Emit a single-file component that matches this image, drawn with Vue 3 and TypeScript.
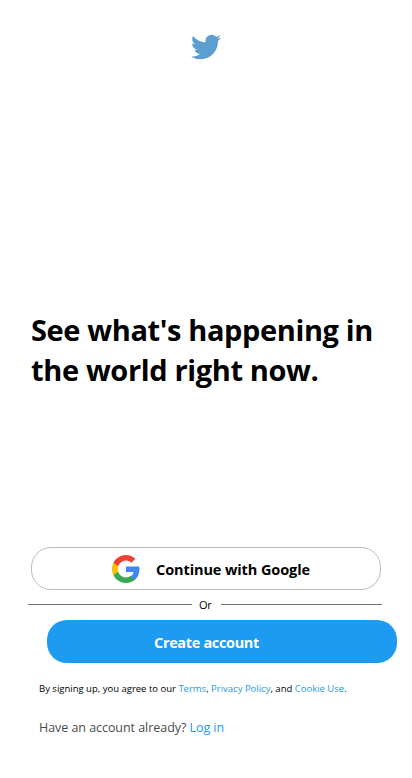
<script setup lang="ts">
const headline: string[] = ["See what's happening in", 'the world right now.']
</script>

<template>
  <main class="page">
    <svg class="bird" viewBox="0 0 24 24" aria-hidden="true">
      <path d="M23.953 4.57a10 10 0 01-2.825.775 4.958 4.958 0 002.163-2.723c-.951.555-2.005.959-3.127 1.184a4.92 4.92 0 00-8.384 4.482C7.69 8.095 4.067 6.13 1.64 3.162a4.822 4.822 0 00-.666 2.475c0 1.71.87 3.213 2.188 4.096a4.904 4.904 0 01-2.228-.616v.06a4.923 4.923 0 003.946 4.827 4.996 4.996 0 01-2.212.085 4.936 4.936 0 004.604 3.417 9.867 9.867 0 01-6.102 2.105c-.39 0-.779-.023-1.17-.067a13.995 13.995 0 007.557 2.209c9.053 0 13.998-7.496 13.998-13.985 0-.21 0-.42-.015-.63A9.935 9.935 0 0024 4.59z" />
    </svg>
    <h1 class="headline">
      <span v-for="(line, i) in headline" :key="line" :class="['line', `line-${i + 1}`]">{{ line }}</span>
    </h1>
    <section class="actions">
      <button class="google" type="button">
        <svg class="google-icon" viewBox="1 1 22 22" aria-hidden="true">
          <path fill="#4285f4" d="M22.56 12.25c0-.78-.07-1.53-.2-2.25H12v4.26h5.92c-.26 1.37-1.04 2.53-2.21 3.31v2.77h3.57c2.08-1.92 3.28-4.74 3.28-8.09z" />
          <path fill="#34a853" d="M12 23c2.97 0 5.46-.98 7.28-2.66l-3.57-2.77c-.98.66-2.23 1.06-3.71 1.06-2.86 0-5.29-1.93-6.16-4.53H2.18v2.84C3.99 20.53 7.7 23 12 23z" />
          <path fill="#fbbc05" d="M5.84 14.09c-.22-.66-.35-1.36-.35-2.09s.13-1.43.35-2.09V7.07H2.18C1.43 8.55 1 10.22 1 12s.43 3.45 1.18 4.93l3.66-2.84z" />
          <path fill="#ea4335" d="M12 5.38c1.62 0 3.06.56 4.21 1.64l3.15-3.15C17.45 2.09 14.97 1 12 1 7.7 1 3.99 3.47 2.18 7.07l3.66 2.84c.87-2.6 3.3-4.53 6.16-4.53z" />
        </svg>
        <span class="google-label">Continue with Google</span>
      </button>
      <div class="divider">
        <span class="rule"></span>
        <span class="or">Or</span>
        <span class="rule"></span>
      </div>
      <button class="create" type="button"><span class="create-label">Create account</span></button>
    </section>
    <p class="terms"><span>By signing up, you agree to our <a>Terms</a>, <a>Privacy Policy</a>, and <a>Cookie Use</a>.</span></p>
    <p class="login"><span>Have an account already? <a>Log in</a></span></p>
  </main>
</template>

<style>
body {
  background: #fff;
}
</style>

<style scoped>
.page {
  box-sizing: border-box;
  display: flex;
  flex-direction: column;
  width: 412px;
  height: 778px;
  padding-top: 32px;
  overflow: hidden;
  color: #000;
  font-family: "Segoe UI", "Open Sans", "Noto Sans", sans-serif;
}
.bird {
  align-self: center;
  width: 30px;
  height: 30px;
  fill: #5b9fd0;
}
.headline {
  display: flex;
  flex-direction: column;
  align-items: flex-start;
  margin: 248px 0 0 31px;
  font-size: 29px;
  line-height: 40px;
  font-weight: 700;
  white-space: nowrap;
}
.line-1 {
  letter-spacing: -0.38px;
}
.line-2 {
  letter-spacing: -0.36px;
}
.actions {
  display: flex;
  flex-direction: column;
  margin-top: 157px;
}
button {
  box-sizing: border-box;
  display: flex;
  align-items: center;
  width: 350px;
  height: 43px;
  border-radius: 20px;
  font: inherit;
  font-size: 14.5px;
  font-weight: 700;
  white-space: nowrap;
}
.google {
  margin-left: 31px;
  padding: 0 0 0 80px;
  gap: 16px;
  border: 1px solid #bdbdbd;
  background: #fff;
  color: #000;
}
.google-icon {
  width: 28px;
  height: 28px;
}
.google-label {
  padding-top: 2px;
  letter-spacing: -0.1px;
}
.divider {
  display: flex;
  align-items: center;
  width: 354px;
  height: 30px;
  margin-left: 28px;
}
.rule {
  width: 164px;
  height: 1px;
  margin-bottom: 1px;
  background: #707070;
}
.rule:last-child {
  width: 161px;
}
.or {
  width: 29px;
  padding: 0 0 2px 7px;
  box-sizing: border-box;
  font-size: 11px;
  letter-spacing: -0.3px;
}
.create {
  margin-left: 47px;
  padding: 2px 0 0 107px;
  border: 0;
  background: #1d9bf0;
  color: #fff;
}
.create-label {
  letter-spacing: -0.34px;
}
p {
  margin: 0 0 0 39px;
  white-space: nowrap;
}
a {
  color: #1d9bf0;
}
.terms {
  margin-top: 18px;
  font-size: 9.5px;
  line-height: 16px;
}
.login {
  margin-top: 21px;
  color: #4b4b4b;
  font-size: 12.5px;
  line-height: 20px;
  letter-spacing: -0.05px;
}
</style>
